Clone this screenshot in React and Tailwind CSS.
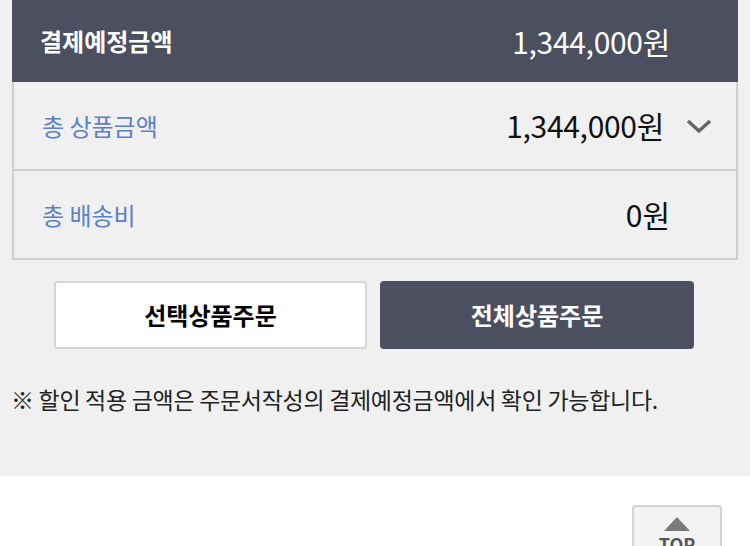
export default function App() {
  const font = { fontFamily: '"Noto Sans CJK KR", "Noto Sans", sans-serif' };
  return (
    <div className="w-[750px] h-[546px] overflow-hidden bg-white" style={font}>
      <div className="bg-[#f0f0f0] h-[476px] px-3">
        <div className="bg-[#4b4f60] h-[82px] flex items-center justify-between pl-[28px] pr-[68px] text-white">
          <span className="text-[24px] font-bold">결제예정금액</span>
          <span className="text-[30px] tracking-[-0.3px]">1,344,000원</span>
        </div>
        <div className="border-2 border-t-0 border-[#cfcfcf]">
          <div className="h-[89px] flex items-center justify-between pl-[28px] pr-[24px] border-b-2 border-[#cfcfcf]">
            <span className="text-[24px] text-[#5a80c8]">총 상품금액</span>
            <div className="flex items-center gap-[22px]">
              <span className="text-[30px] tracking-[-0.3px] text-[#111]">1,344,000원</span>
              <svg width="26" height="16" viewBox="0 0 26 16">
                <path d="M2 3 L13 13 L24 3" fill="none" stroke="#666" strokeWidth="3.5" />
              </svg>
            </div>
          </div>
          <div className="h-[87px] flex items-center justify-between pl-[28px] pr-[66px]">
            <span className="text-[24px] text-[#5a80c8]">총 배송비</span>
            <span className="text-[30px] text-[#111]">0원</span>
          </div>
        </div>
        <div className="flex gap-[13px] pl-[42px] mt-[21px]">
          <button className="w-[313px] h-[68px] bg-white border-2 border-[#d6d6d6] rounded text-[24px] font-bold text-black">
            선택상품주문
          </button>
          <button className="w-[314px] h-[68px] bg-[#4b4f60] rounded text-[24px] font-bold text-white">
            전체상품주문
          </button>
        </div>
        <p className="mt-[33px] -ml-[1px] text-[23px] text-[#222] tracking-[-0.3px]">
          ※ 할인 적용 금액은 주문서작성의 결제예정금액에서 확인 가능합니다.
        </p>
      </div>
      <div className="flex justify-end pr-[28px] pt-[29px]">
        <div className="w-[90px] h-[60px] bg-[#f3f3f3] border-2 border-[#d4d4d4] rounded flex flex-col items-center pt-[10px]">
          <svg width="26" height="14" viewBox="0 0 26 14">
            <path d="M13 0 L26 14 L0 14 Z" fill="#7a7a7a" />
          </svg>
          <span className="text-[18px] font-bold text-[#555] leading-none mt-[4px]">TOP</span>
        </div>
      </div>
    </div>
  );
}
